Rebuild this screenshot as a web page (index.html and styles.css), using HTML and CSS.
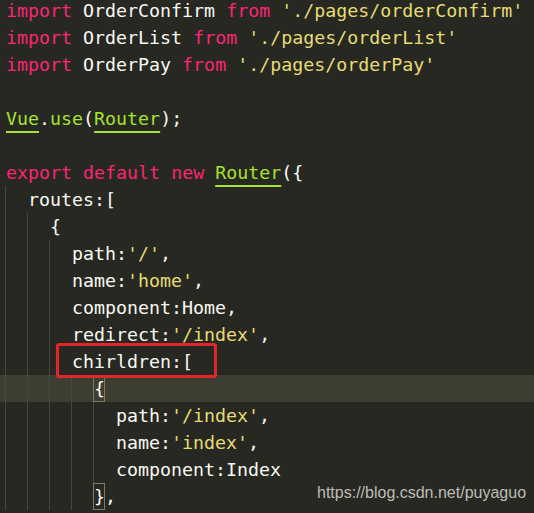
FILE: index.html
```html
<!DOCTYPE html>
<html lang="en">
<head>
    <meta charset="UTF-8">
    <meta name="viewport" content="width=device-width, initial-scale=1.0">
    <title>router/index.js</title>
    <link rel="stylesheet" href="styles.css">
</head>
<body>
    <div class="editor">
        <div class="code">
            <div class="line"><span class="kw">import</span> OrderConfirm <span class="kw">from</span> <span class="str">'./pages/orderConfirm'</span></div>
            <div class="line"><span class="kw">import</span> OrderList <span class="kw">from</span> <span class="str">'./pages/orderList'</span></div>
            <div class="line"><span class="kw">import</span> OrderPay <span class="kw">from</span> <span class="str">'./pages/orderPay'</span></div>
            <div class="line"></div>
            <div class="line"><span class="fn link">Vue</span>.<span class="fn">use</span>(<span class="fn link">Router</span>);</div>
            <div class="line"></div>
            <div class="line"><span class="kw">export</span> <span class="kw">default</span> <span class="kw">new</span> <span class="fn link">Router</span>({</div>
            <div class="line"><span class="ind"></span>routes:[</div>
            <div class="line"><span class="ind"></span><span class="ind"></span>{</div>
            <div class="line"><span class="ind"></span><span class="ind"></span><span class="ind"></span>path:<span class="str">'/'</span>,</div>
            <div class="line"><span class="ind"></span><span class="ind"></span><span class="ind"></span>name:<span class="str">'home'</span>,</div>
            <div class="line"><span class="ind"></span><span class="ind"></span><span class="ind"></span>component:Home,</div>
            <div class="line"><span class="ind"></span><span class="ind"></span><span class="ind"></span>redirect:<span class="str">'/index'</span>,</div>
            <div class="line"><span class="ind"></span><span class="ind"></span><span class="ind"></span>chirldren:[</div>
            <div class="line current"><span class="ind"></span><span class="ind"></span><span class="ind"></span><span class="ind"></span><span class="match">{</span></div>
            <div class="line"><span class="ind"></span><span class="ind"></span><span class="ind"></span><span class="ind"></span><span class="ind"></span>path:<span class="str">'/index'</span>,</div>
            <div class="line"><span class="ind"></span><span class="ind"></span><span class="ind"></span><span class="ind"></span><span class="ind"></span>name:<span class="str">'index'</span>,</div>
            <div class="line"><span class="ind"></span><span class="ind"></span><span class="ind"></span><span class="ind"></span><span class="ind"></span>component:Index</div>
            <div class="line"><span class="ind"></span><span class="ind"></span><span class="ind"></span><span class="ind"></span><span class="match">}</span>,</div>
        </div>
        <div class="mark"></div>
        <div class="watermark">https://blog.csdn.net/puyaguo</div>
    </div>
</body>
</html>
```

FILE: styles.css
```css
body {
    margin: 0;
    background-color: #272822;
    overflow: hidden;
}

.editor {
    position: relative;
    width: 534px;
    height: 513px;
    overflow: hidden;
    background-color: #272822;
}

.code {
    margin-top: -3px;
    font-family: "DejaVu Sans Mono", "Liberation Mono", monospace;
    font-size: 18.3px;
    color: #f8f8f2;
}

.line {
    height: 27px;
    line-height: 27px;
    padding-left: 6px;
    white-space: pre;
}

.line.current {
    background-color: #3e3d32;
}

/* indent guides, 2 chars each */
.ind {
    display: inline-block;
    width: 22px;
    height: 27px;
    vertical-align: top;
    box-shadow: inset 1px 0 0 #46473f;
    margin-left: -1px;
    margin-right: 1px;
}

.kw {
    color: #f92672;
}

.str {
    color: #e6db74;
}

.fn {
    color: #a6e22e;
}

.link {
    text-decoration: underline;
    text-decoration-thickness: 2px;
    text-underline-offset: 6px;
}

.match {
    display: inline-block;
    width: 11px;
    height: 27px;
    vertical-align: top;
    box-shadow: inset 0 0 0 1px #7c7b6a;
    margin-left: -1px;
    padding-left: 1px;
}

/* red annotation box */
.mark {
    position: absolute;
    left: 56px;
    top: 343px;
    width: 155px;
    height: 29px;
    border: 3px solid #e3262c;
    border-radius: 3px;
}

.watermark {
    position: absolute;
    left: 317px;
    top: 484px;
    font-family: "Liberation Sans", Arial, sans-serif;
    font-size: 16px;
    color: #bdbdb6;
}
```
